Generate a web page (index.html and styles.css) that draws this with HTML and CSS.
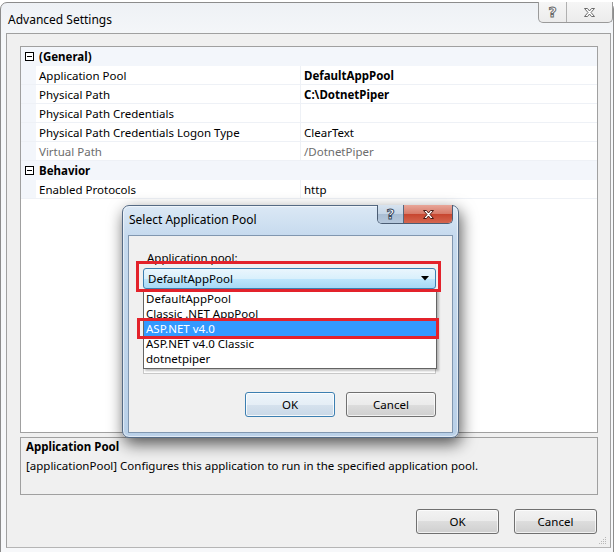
FILE: index.html
```html
<!DOCTYPE html>
<html>
<head>
<meta charset="utf-8">
<link rel="stylesheet" href="styles.css">
</head>
<body>
<div class="window">
  <div class="titlebar">
    <span class="title">Advanced Settings</span>
    <div class="capbtns">
      <span class="cap help">?</span>
      <span class="cap close">
        <svg width="13" height="11" viewBox="0 0 13 11"><path d="M1.5,1.5 H4.5 L6.5,4 L8.5,1.5 H11.5 L8,5.5 L11.5,9.5 H8.5 L6.5,7 L4.5,9.5 H1.5 L5,5.5 Z" fill="#fff" stroke="#6a6a6a" stroke-width="1"/></svg>
      </span>
    </div>
  </div>
  <div class="client">
    <div class="grid">
      <div class="row cat"><span class="margin"><span class="expander"></span></span><span class="name">(General)</span></div>
      <div class="row"><span class="margin"></span><span class="name">Application Pool</span><span class="value bold">DefaultAppPool</span></div>
      <div class="row"><span class="margin"></span><span class="name">Physical Path</span><span class="value bold">C:\DotnetPiper</span></div>
      <div class="row"><span class="margin"></span><span class="name">Physical Path Credentials</span><span class="value"></span></div>
      <div class="row"><span class="margin"></span><span class="name">Physical Path Credentials Logon Type</span><span class="value">ClearText</span></div>
      <div class="row disabled"><span class="margin"></span><span class="name">Virtual Path</span><span class="value">/DotnetPiper</span></div>
      <div class="row cat"><span class="margin"><span class="expander"></span></span><span class="name">Behavior</span></div>
      <div class="row"><span class="margin"></span><span class="name">Enabled Protocols</span><span class="value">http</span></div>
    </div>
    <div class="desc">
      <div class="desc-title">Application Pool</div>
      <div class="desc-text">[applicationPool] Configures this application to run in the specified application pool.</div>
    </div>
    <div class="actions">
      <span class="btn">OK</span>
      <span class="btn">Cancel</span>
    </div>
    <svg class="grip" width="8" height="8" viewBox="0 0 8 8">
      <g fill="#b8b8b8"><rect x="6" y="0" width="1" height="1"/><rect x="4" y="2" width="1" height="1"/><rect x="6" y="2" width="1" height="1"/><rect x="2" y="4" width="1" height="1"/><rect x="4" y="4" width="1" height="1"/><rect x="6" y="4" width="1" height="1"/><rect x="0" y="6" width="1" height="1"/><rect x="2" y="6" width="1" height="1"/><rect x="4" y="6" width="1" height="1"/><rect x="6" y="6" width="1" height="1"/></g>
    </svg>
  </div>

  <div class="modal">
    <div class="m-titlebar">
      <span class="m-title">Select Application Pool</span>
      <div class="m-capbtns">
        <span class="m-cap m-help">?</span>
        <span class="m-cap m-close">
          <svg width="13" height="11" viewBox="0 0 13 11"><path d="M1.5,1.5 H4.5 L6.5,4 L8.5,1.5 H11.5 L8,5.5 L11.5,9.5 H8.5 L6.5,7 L4.5,9.5 H1.5 L5,5.5 Z" fill="#fff" stroke="#4a1a14" stroke-width="1"/></svg>
        </span>
      </div>
    </div>
    <div class="m-client">
      <div class="m-label">Application pool:</div>
      <div class="combo">
        <span>DefaultAppPool</span>
        <svg width="8" height="5" viewBox="0 0 8 5"><path d="M0,0 H8 L4,4.5 Z" fill="#000"/></svg>
      </div>
      <div class="listbox"></div>
      <div class="m-actions">
        <span class="btn m-btn default">OK</span>
        <span class="btn m-btn">Cancel</span>
      </div>
      <div class="dropdown">
        <div class="item">DefaultAppPool</div>
        <div class="item">Classic .NET AppPool</div>
        <div class="item selected">ASP.NET v4.0</div>
        <div class="item">ASP.NET v4.0 Classic</div>
        <div class="item">dotnetpiper</div>
      </div>
      <div class="redbox rb1"></div>
      <div class="redbox rb2"></div>
    </div>
  </div>
</div>
</body>
</html>
```

FILE: styles.css
```css
* { box-sizing: border-box; }
html, body { margin: 0; padding: 0; }
body {
  width: 616px;
  height: 552px;
  overflow: hidden;
  background: #ffffff;
  font-family: "Noto Sans", "Open Sans", sans-serif;
  font-size: 11.5px;
  color: #000;
}
.window {
  position: relative;
  width: 614px;
  height: 556px;
  margin-top: 2px;
  border: 1px solid #8c8c8c;
  border-radius: 7px 7px 0 0;
  background: linear-gradient(180deg, #eef1f5 0%, #f6f8fa 40px, #f7f8fa 100%);
  display: flex;
  flex-direction: column;
}
.titlebar {
  height: 30px;
  display: flex;
  align-items: flex-start;
  padding-left: 7px;
}
.title {
  margin-top: 9px;
  line-height: 16px;
  font-size: 12px;
}
.capbtns {
  margin-left: auto;
  margin-right: 0;
  display: flex;
  border: 1px solid #9a9a9a;
  border-top: none;
  border-radius: 0 0 5px 5px;
  height: 21px;
  background: linear-gradient(180deg, #f6f6f6, #ececec);
  margin-top: -1px;
}
.cap {
  display: flex;
  align-items: center;
  justify-content: center;
}
.help {
  width: 28px;
  border-right: 1px solid #b0b0b0;
  font-weight: bold;
  font-size: 14px;
  color: #fff;
  -webkit-text-stroke: 1px #6a6a6a;
  font-family: "DejaVu Sans", sans-serif;
}
.close { width: 45px; }

.client {
  margin: 0 2px 0 5px;
  height: 515px;
  border: 1px solid #a0a0a0;
  border-bottom-color: #b5b5b5;
  background: #f0f0f0;
  padding: 12px 12px 0 13px;
  display: flex;
  flex-direction: column;
  position: relative;
}
.grid {
  height: 387px;
  border: 1px solid #a0a0a0;
  background: #fff;
  display: flex;
  flex-direction: column;
}
.row {
  height: 19px;
  display: flex;
  align-items: stretch;
  border-bottom: 1px solid #eef1f6;
  line-height: 19px;
  flex-shrink: 0;
}
.row .margin {
  width: 15px;
  background: #f3f6fb;
  display: flex;
  align-items: center;
  justify-content: center;
  flex-shrink: 0;
}
.row .name {
  width: 265px;
  padding-left: 3px;
  border-right: 1px solid #eef1f6;
  white-space: nowrap;
}
.row .value {
  flex: 1;
  padding-left: 3px;
  white-space: nowrap;
}
.row.cat { background: #f3f6fb; border-bottom-color: #f3f6fb; }
.row.cat .name { font-weight: bold; border-right: none; }
.row.disabled { color: #6d6d6d; }
.bold { font-weight: bold; }
.expander {
  width: 9px;
  height: 9px;
  border: 1px solid #000;
  background: #fff;
  position: relative;
  margin-left: 2px;
  margin-top: 1px;
}
.expander::after {
  content: "";
  position: absolute;
  left: 1px;
  top: 3px;
  width: 5px;
  height: 1px;
  background: #000;
}
.desc {
  margin-top: 4px;
  height: 58px;
  border: 1px solid #a0a0a0;
  padding: 1px 5px;
}
.desc-title { font-weight: bold; line-height: 16px; }
.desc-text { line-height: 16px; margin-top: 3px; }
.actions {
  margin-top: 14px;
  display: flex;
  justify-content: flex-end;
  gap: 15px;
  padding-right: 1px;
}
.btn {
  width: 83px;
  height: 25px;
  border: 1px solid #707070;
  border-radius: 3px;
  background: linear-gradient(180deg, #f2f2f2 0%, #ebebeb 50%, #dddddd 50%, #cfcfcf 100%);
  box-shadow: inset 0 0 0 1px rgba(255,255,255,0.7);
  display: flex;
  align-items: center;
  justify-content: center;
  line-height: 16px;
}
.grip { position: absolute; right: 3px; bottom: 2px; }

/* modal */
.modal {
  position: absolute;
  left: 121px;
  top: 202px;
  width: 337px;
  height: 233px;
  border: 1px solid #556a84;
  border-radius: 7px;
  background: linear-gradient(180deg, #dbe8f5 0%, #c6daee 30px, #b9d0e8 100%);
  box-shadow: 0 0 1px 1px rgba(255,255,255,0.6) inset, 2px 6px 16px rgba(0,0,0,0.65);
  padding: 0 5px 4px 5px;
  display: flex;
  flex-direction: column;
}
.m-titlebar {
  height: 29px;
  display: flex;
  align-items: flex-start;
}
.m-title {
  margin-top: 6px;
  margin-left: 1px;
  line-height: 16px;
  font-size: 12px;
}
.m-capbtns {
  margin-left: auto;
  display: flex;
  height: 19px;
  margin-top: -1px;
  border: 1px solid #4b5d74;
  border-top: none;
  border-radius: 0 0 5px 5px;
  overflow: hidden;
}
.m-cap { display: flex; align-items: center; justify-content: center; }
.m-help {
  width: 26px;
  border-right: 1px solid #56677c;
  background: linear-gradient(180deg, #d7e3ef 0%, #c5d5e6 50%, #a9bdd3 50%, #b6c8dc 100%);
  font-weight: bold;
  font-size: 14px;
  color: #fff;
  -webkit-text-stroke: 1px #3b4a5e;
  font-family: "DejaVu Sans", sans-serif;
}
.m-close {
  width: 48px;
  background: linear-gradient(180deg, #e8a699 0%, #d77a68 50%, #c7452f 50%, #d5664f 100%);
}
.m-client {
  flex: 1;
  position: relative;
  border: 1px solid #8197b0;
  background: #f0f0f0;
  padding: 14px 16px 0 14px;
  display: flex;
  flex-direction: column;
}
.m-label { margin-left: 4px; line-height: 16px; }
.combo {
  margin-top: 2px;
  height: 21px;
  border: 1px solid #3c7fb1;
  border-radius: 3px;
  background: linear-gradient(180deg, #eaf6fd 0%, #d9f0fc 50%, #bee6fd 50%, #a7d9f5 100%);
  display: flex;
  align-items: center;
  padding: 0 6px 0 4px;
  justify-content: space-between;
}
.listbox {
  height: 85px;
  border: 1px solid #c8c8c8;
  background: #fff;
}
.m-actions {
  margin-top: 18px;
  display: flex;
  justify-content: flex-end;
  gap: 11px;
}
.m-btn { width: 90px; }
.m-btn.default {
  border-color: #3c7fb1;
  background: linear-gradient(180deg, #edf4fa 0%, #e5eef6 50%, #d6e2ee 50%, #c9d8e7 100%);
  box-shadow: inset 0 0 0 1px rgba(255,255,255,0.8);
}
.dropdown {
  position: absolute;
  left: 14px;
  top: 53px;
  width: 294px;
  height: 80px;
  border: 1px solid #646464;
  background: #fff;
  box-shadow: 2px 2px 2px rgba(0,0,0,0.25);
  padding-top: 1px;
}
.item {
  height: 15px;
  line-height: 15px;
  padding-left: 2px;
  white-space: nowrap;
}
.item.selected { background: #3399ff; color: #fff; }
.redbox {
  position: absolute;
  border: 3px solid #e3222b;
}
.rb1 { left: 7px; top: 25px; width: 305px; height: 31px; }
.rb2 { left: 8px; top: 82px; width: 302px; height: 21px; }
```
